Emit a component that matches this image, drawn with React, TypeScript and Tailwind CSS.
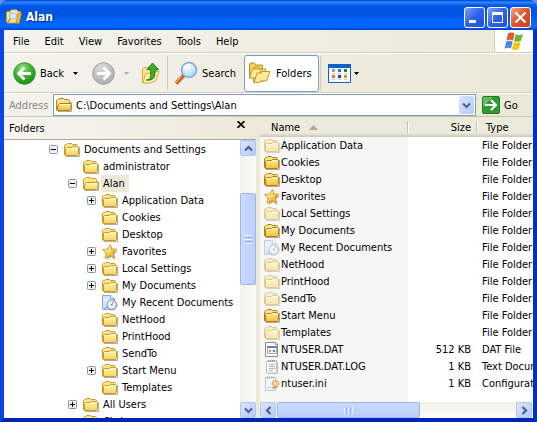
import React from 'react';

type IconName = 'folder' | 'open' | 'star' | 'recent' | 'dat' | 'log' | 'ini';

function FolderIcon({ open = false, deep = false }: { open?: boolean; deep?: boolean }) {
  const edge = deep ? '#b87c10' : '#cb9a24';
  const fill = deep ? 'url(#folder-deep)' : 'url(#folder-fill)';
  return (
    <svg width="16" height="16" viewBox="0 0 16 16" className="shrink-0" aria-hidden="true">
      <path d="M2 14.500h13.500V5" fill="none" stroke="#777" strokeOpacity=".6" />
      <path d="M.5 12.500V3.500l1-1h1l1-1h4l1 1h4l1 1V13.500h-12z" fill="#fbe58c" stroke={edge} />
      {open ? (
        <path d="M1 13.500 2.500 7.500l1-1h11.500V12l-1 1.500H1z" fill={fill} stroke={edge} />
      ) : (
        <path d="M1.500 13.500V6.500l1-1h5l1-1h5l1 1v7l-1 1z" fill={fill} stroke={edge} />
      )}
      <path d={open ? 'M4 7.500h10' : 'M3 6.500h5l1-1h4.500'} fill="none" stroke="#fffbd0" />
    </svg>
  );
}

function StarIcon() {
  return (
    <svg width="16" height="16" viewBox="0 0 16 16" className="shrink-0" aria-hidden="true">
      <path d="m9 2 1.700 4.500 5 .3-3.700 3.400 1.600 5.500-4.400-2.700-4.300 3 1-5.500z" fill="#777" fillOpacity=".6" />
      <path d="m8.500.5 1.200 4.500 5 0-3.700 3.500 1.500 5.500-4.700-2.500L3 14.500l1-5.300L.5 5.500l5-.3z" fill="url(#star-fill)" stroke="#c8921a" strokeWidth=".8" />
      <path d="M8 3v5L3 6.500" fill="none" stroke="#fff4a8" />
    </svg>
  );
}

function RecentIcon() {
  return (
    <svg width="16" height="16" viewBox="0 0 16 16" className="shrink-0" aria-hidden="true">
      <path d="M.5.5h8l4 3v11h-12z" fill="#d4e3fa" stroke="#8ca8d8" />
      <path d="M8.500.5v3h4" fill="#fff" stroke="#8ca8d8" />
      <path d="M2 3.500h4M2 5.500h3" stroke="#fff" />
      <circle cx="10" cy="10" r="5" fill="#b9cbe6" stroke="#8094b2" />
      <circle cx="9.500" cy="9.500" r="3.500" fill="#fff" stroke="#d5e0ee" />
      <path d="m9 10 2.500-3M9 10h2" stroke="#5478a8" />
      <path d="m5.500 12-3 1.500" stroke="#5b8adc" />
    </svg>
  );
}

function DatIcon() {
  return (
    <svg width="16" height="16" viewBox="0 0 16 16" className="shrink-0" aria-hidden="true">
      <path d="M1.500.5h10l2 2v12h-12z" fill="#fff" stroke="#8b8b86" />
      <path d="M11.500.5v2h2" fill="#ddd" stroke="#8b8b86" />
      <path d="M3.500 4.500h9v7h-9z" fill="#fff" stroke="#a5aac0" />
      <path d="M3 5h10" stroke="#7080a8" strokeWidth="2" />
      <path d="m4.500 9 1.500-1.500L7.500 9 6 10.500z" fill="#e8705c" />
      <path d="m8.500 9 1.500-1.500L11.500 9 10 10.500z" fill="#3f7ad8" />
    </svg>
  );
}

function LogIcon() {
  return (
    <svg width="16" height="16" viewBox="0 0 16 16" className="shrink-0" aria-hidden="true">
      <path d="M4 14.500h9.500V3" fill="none" stroke="#c4c4c4" />
      <path d="M2.500 2.500 12.500 1.500v11l-2 1.500h-8z" fill="#fff" stroke="#b9c0c4" />
      <path d="M4.500 1v2m2-2v2m2-2v2m2-2v2" stroke="#7f959d" />
      <path d="M5 5.500h6m-6 2h6m-6 2h6m-6 2h4" stroke="#aeb8bc" />
    </svg>
  );
}

function IniIcon() {
  return (
    <svg width="16" height="16" viewBox="0 0 16 16" className="shrink-0" aria-hidden="true">
      <path d="M1.500 1.500h10v13h-10z" fill="#f2f8ff" stroke="#b8c3cf" />
      <path d="M3.500.5v2m2-2v2m2-2v2m2-2v2" stroke="#9aacba" />
      <path d="M3.500 10.500h3v2h-3z" fill="#bcd8f5" />
      <circle cx="11.500" cy="7.500" r="3.500" fill="#ecc487" stroke="#d6ae70" strokeDasharray="2 1" />
      <circle cx="11" cy="7.500" r="1" fill="#fff4dd" />
      <path d="M8 11.500c2 1.500 3 0 5-1" fill="none" stroke="#c79a5d" strokeWidth="1.500" />
    </svg>
  );
}

function ItemIcon({ name, deep }: { name: IconName; deep?: boolean }) {
  if (name === 'star') return <StarIcon />;
  if (name === 'recent') return <RecentIcon />;
  if (name === 'dat') return <DatIcon />;
  if (name === 'log') return <LogIcon />;
  if (name === 'ini') return <IniIcon />;
  return <FolderIcon open={name === 'open'} deep={deep} />;
}

function Gradients() {
  return (
    <svg width="0" height="0" className="absolute" aria-hidden="true">
      <defs>
        <linearGradient id="folder-fill" x1="0" y1="0" x2="0" y2="1">
          <stop offset="0" stopColor="#fff6ae" />
          <stop offset="1" stopColor="#f7d262" />
        </linearGradient>
        <linearGradient id="folder-deep" x1="0" y1="0" x2="0" y2="1">
          <stop offset="0" stopColor="#fff096" />
          <stop offset="1" stopColor="#f4bd38" />
        </linearGradient>
        <linearGradient id="star-fill" x1="0" y1="0" x2="1" y2="1">
          <stop offset="0" stopColor="#fff08a" />
          <stop offset="1" stopColor="#f0a818" />
        </linearGradient>
        <radialGradient id="back-fill" cx=".4" cy=".25" r=".8">
          <stop offset="0" stopColor="#8fe07c" />
          <stop offset=".5" stopColor="#3cb22c" />
          <stop offset="1" stopColor="#178a12" />
        </radialGradient>
        <radialGradient id="forward-fill" cx=".4" cy=".25" r=".8">
          <stop offset="0" stopColor="#dcdcdc" />
          <stop offset="1" stopColor="#a9a9a9" />
        </radialGradient>
        <radialGradient id="lens-fill" cx=".4" cy=".3" r=".7">
          <stop offset="0" stopColor="#ffffff" />
          <stop offset="1" stopColor="#a2d8f8" />
        </radialGradient>
      </defs>
    </svg>
  );
}

const menus = ['File', 'Edit', 'View', 'Favorites', 'Tools', 'Help'];

interface TreeNode {
  label: string;
  level: 0 | 1 | 2;
  toggle?: 'plus' | 'minus';
  icon?: IconName;
  selected?: boolean;
}

const tree: TreeNode[] = [
  { label: 'Documents and Settings', level: 0, toggle: 'minus' },
  { label: 'administrator', level: 1 },
  { label: 'Alan', level: 1, toggle: 'minus', icon: 'open', selected: true },
  { label: 'Application Data', level: 2, toggle: 'plus' },
  { label: 'Cookies', level: 2 },
  { label: 'Desktop', level: 2 },
  { label: 'Favorites', level: 2, toggle: 'plus', icon: 'star' },
  { label: 'Local Settings', level: 2, toggle: 'plus' },
  { label: 'My Documents', level: 2, toggle: 'plus' },
  { label: 'My Recent Documents', level: 2, icon: 'recent' },
  { label: 'NetHood', level: 2 },
  { label: 'PrintHood', level: 2 },
  { label: 'SendTo', level: 2 },
  { label: 'Start Menu', level: 2, toggle: 'plus' },
  { label: 'Templates', level: 2 },
  { label: 'All Users', level: 1, toggle: 'plus' },
  { label: 'Chris', level: 1 },
];

const indents = ['pl-[45px]', 'pl-[64px]', 'pl-[83px]'];

interface FileEntry {
  name: string;
  size?: string;
  type: string;
  icon?: IconName;
  hidden?: boolean;
}

const files: FileEntry[] = [
  { name: 'Application Data', type: 'File Folder', hidden: true },
  { name: 'Cookies', type: 'File Folder' },
  { name: 'Desktop', type: 'File Folder' },
  { name: 'Favorites', type: 'File Folder', icon: 'star' },
  { name: 'Local Settings', type: 'File Folder', hidden: true },
  { name: 'My Documents', type: 'File Folder' },
  { name: 'My Recent Documents', type: 'File Folder', icon: 'recent', hidden: true },
  { name: 'NetHood', type: 'File Folder', hidden: true },
  { name: 'PrintHood', type: 'File Folder', hidden: true },
  { name: 'SendTo', type: 'File Folder', hidden: true },
  { name: 'Start Menu', type: 'File Folder' },
  { name: 'Templates', type: 'File Folder', hidden: true },
  { name: 'NTUSER.DAT', size: '512 KB', type: 'DAT File', icon: 'dat' },
  { name: 'NTUSER.DAT.LOG', size: '1 KB', type: 'Text Document', icon: 'log' },
  { name: 'ntuser.ini', size: '1 KB', type: 'Configuration Settings', icon: 'ini' },
];

function TitleBar() {
  const control = 'flex size-[21px] items-center justify-center rounded-[3px] border border-white';
  return (
    <header className="flex h-[30px] shrink-0 items-center gap-1 rounded-t-[7px] bg-[linear-gradient(to_bottom,#0a4fd8_0,#0a4fd8_1px,#3090ff_2px,#0f6ef5_4px,#0054e3_6px,#0055e6_16px,#0066ff_21px,#0066ff_27px,#003fd0_30px)] pt-1 pr-[6px] pl-[6px]">
      <svg width="16" height="16" viewBox="0 0 16 16" aria-hidden="true">
        <path d="M.5 12V3.500l1-1h2l1-1 3 1h7v2l-1.500 9.500H1.500z" fill="#fde78a" stroke="#d09a20" />
        <path d="M4 5l1.500-4H11l1 4z" fill="#fffbe4" stroke="#d9b65c" />
        <path d="m10 14 2.500-9.500h3L13 14z" fill="#f4bd44" stroke="#c88b14" />
        <circle cx="7" cy="7" r="3.500" fill="#d2efff" stroke="#8fbcdc" />
        <path d="m2 13 2.500-3.500" stroke="#e08a3a" strokeWidth="1.500" />
      </svg>
      <h1 className="flex-1 text-[12px] leading-4 font-bold text-white [text-shadow:1px_1px_1px_#002a8a]">Alan</h1>
      <div className="flex gap-0.5">
        <button aria-label="Minimize" className={`${control} bg-linear-to-br from-[#7f9ff5] via-[#2f5fe8] to-[#2253dd]`}>
          <svg width="19" height="19" viewBox="0 0 19 19"><path d="M4 12h7v3H4z" fill="#fff" /></svg>
        </button>
        <button aria-label="Maximize" className={`${control} bg-linear-to-br from-[#7f9ff5] via-[#2f5fe8] to-[#2253dd]`}>
          <svg width="19" height="19" viewBox="0 0 19 19"><path d="M4.500 4.500h10v10h-10z" fill="none" stroke="#fff" /><path d="M4 4h11v3H4z" fill="#fff" /></svg>
        </button>
        <button aria-label="Close" className={`${control} bg-linear-to-br from-[#f0a088] via-[#e0532c] to-[#cf3f17]`}>
          <svg width="19" height="19" viewBox="0 0 19 19"><path d="m4.500 4.500 10 10M14.500 4.500l-10 10" stroke="#fff" strokeWidth="2.200" /></svg>
        </button>
      </div>
    </header>
  );
}

function MenuBar() {
  return (
    <div className="flex h-[23px] shrink-0 border-b border-[#d3ceb8] bg-linear-to-r from-[#f4f3ee] to-[#ece9d8]">
      <nav className="flex flex-1 items-center gap-[15px] pl-[9px]">
        {menus.map((m) => (
          <button key={m}>{m}</button>
        ))}
      </nav>
      <div className="flex w-[39px] items-center justify-center border-l border-[#d3ceb8] bg-white">
        <svg width="20" height="19" viewBox="0 0 20 19" aria-label="Windows" role="img">
          <path d="M4 1.500c2-1.200 4-1.200 6.500 0L9 8.500C7 7.500 5 7.500 2.500 8.500z" fill="#e8562a" />
          <path d="M11.500 2.300c2.500 1.200 4.500 1 7.500-.5l-2 7c-2 1.200-4.500 1.500-7 .2z" fill="#6cb83c" />
          <path d="M2.200 9.800C4.500 8.500 6.500 8.500 8.700 9.600L7 16.500c-2-1-4-1-6.500.2z" fill="#4a86e0" />
          <path d="M9.700 10.200c2.500 1 4.500.8 7-.5l-2 7.300c-2.500 1.200-4.500 1.200-6.800 0z" fill="#f6c416" />
        </svg>
      </div>
    </div>
  );
}

function DownArrow({ muted = false }: { muted?: boolean }) {
  return (
    <svg width="5" height="3" viewBox="0 0 5 3" aria-hidden="true">
      <path d="M0 0h5L2.500 3z" fill={muted ? '#b5b2a3' : '#000'} />
    </svg>
  );
}

function Toolbar() {
  return (
    <div className="flex h-10 shrink-0 items-center border-t border-b border-t-white border-b-[#d3ceb8] bg-linear-to-r from-[#f3f2ed] to-[#ebe8d7] pl-[9px]">
      <button className="flex items-center gap-1">
        <svg width="23" height="23" viewBox="0 0 23 23" aria-hidden="true">
          <circle cx="11.500" cy="11.500" r="10.800" fill="url(#back-fill)" stroke="#3c9634" />
          <path d="M18 11.500H6M11.500 5.500l-6 6 6 6" fill="none" stroke="#fff" strokeWidth="2.800" />
        </svg>
        Back
      </button>
      <button aria-label="Back history" className="ml-[9px] py-2"><DownArrow /></button>
      <button aria-label="Forward" className="ml-[14px]">
        <svg width="23" height="23" viewBox="0 0 23 23" aria-hidden="true">
          <circle cx="11.500" cy="11.500" r="10.800" fill="url(#forward-fill)" stroke="#a2a2a2" />
          <path d="M5 11.500h12M11.500 5.500l6 6-6 6" fill="none" stroke="#fff" strokeWidth="2.800" />
        </svg>
      </button>
      <button aria-label="Forward history" className="ml-[9px] py-2"><DownArrow muted /></button>
      <button aria-label="Up" className="ml-3">
        <svg width="20" height="24" viewBox="0 0 20 24" aria-hidden="true">
          <path d="M1.500 21.500V8l1.500-1.500h4l1 1.500h8v4l-2 8-7 2z" fill="#fbe68e" stroke="#dcae42" />
          <path d="m2 22 2.500-9.500 6-.5 1-1.500h6.500l-3 9.500-6.500 2z" fill="#fff0ac" stroke="#dcae42" />
          <path d="M5.500 19c4.500 0 4.500-4 4-10.500H6L11.500 2l6 6.500h-3.500c.5 7-1 11.500-8.500 10.500z" fill="#3fae2c" stroke="#1d7f17" />
        </svg>
      </button>
      <div className="mx-[6px] h-[34px] w-px bg-[#d0ccb6]" />
      <button className="flex items-center gap-1">
        <svg width="24" height="24" viewBox="0 0 24 24" aria-hidden="true">
          <path d="m10 14-8 8.500" stroke="#c45a1c" strokeWidth="4" />
          <path d="m8 15-6.500 7" stroke="#f5a05c" strokeWidth="1.500" />
          <circle cx="15" cy="9" r="7.500" fill="url(#lens-fill)" stroke="#84a8d0" strokeWidth="1.500" />
          <path d="M10.500 8c.5-2.500 2-3.500 4-3.800" fill="none" stroke="#fff" strokeWidth="1.500" />
        </svg>
        Search
      </button>
      <button className="ml-2 flex h-[37px] items-center gap-[5px] rounded-[3px] border border-[#7f9fc4] bg-white pr-[6px] pl-1">
        <svg width="22" height="22" viewBox="0 0 22 22" aria-hidden="true">
          <path d="M.5 16V3l1-2h4l1 2h7v3l-2 9z" fill="#f5d164" stroke="#b98a20" />
          <path d="M4.500 20V7l1-2h4l1 2h6v4l-2 8z" fill="#fbe186" stroke="#c4932a" />
          <path d="m.5 16 3-9 9 0-3 9z" fill="#fdeca0" stroke="#c4932a" />
          <path d="m5 20.500 3-9.500h4l1-1.500h8L17.500 19l-6 0-1 1.500z" fill="#ffe994" stroke="#c4932a" />
        </svg>
        Folders
      </button>
      <div className="mr-[7px] ml-px h-[34px] w-px bg-[#d0ccb6]" />
      <button aria-label="Views" className="flex items-center gap-[3px]">
        <svg width="23" height="19" viewBox="0 0 23 19" aria-hidden="true">
          <path d="M.5.5h22v18H.5z" fill="#fff" stroke="#0f62ca" />
          <path d="M0 0h23v4H0z" fill="#0f62ca" />
          <path d="M4 5h3v3H4z" fill="#9a93bd" /><path d="M10 5h3v3h-3z" fill="#1c7bd2" /><path d="M16 5h3v3h-3z" fill="#1d8d1d" />
          <path d="M4 11h3v3H4z" fill="#e6704a" /><path d="M10 11h3v3h-3z" fill="#1448bb" /><path d="M16 11h3v3h-3z" fill="#c99c1d" />
          <path d="M4 9.500h3m3 0h3m3 0h3m-15 6h3m3 0h3m3 0h3" stroke="#c8ccd6" />
        </svg>
        <DownArrow />
      </button>
    </div>
  );
}

function Chevron({ d }: { d: string }) {
  return (
    <svg width="9" height="9" viewBox="0 0 9 9" aria-hidden="true">
      <path d={d} fill="none" stroke="#4d6185" strokeWidth="2.200" />
    </svg>
  );
}

function ScrollButton({ label, d }: { label: string; d: string }) {
  return (
    <button aria-label={label} className="flex size-4 shrink-0 items-center justify-center rounded-[2px] border border-[#b0c4f0] bg-linear-to-br from-[#dbe6ff] to-[#b4cafa]">
      <Chevron d={d} />
    </button>
  );
}

const UP = 'M1 6.500 4.500 3 8 6.500';
const DOWN = 'M1 2.500 4.500 6 8 2.500';
const LEFT = 'M6.500 1 3 4.500 6.500 8';
const RIGHT = 'M2.500 1 6 4.500 2.500 8';

function AddressBar() {
  return (
    <form className="flex h-[24px] shrink-0 items-center border-t border-b border-t-white border-b-[#c9c5b2] bg-linear-to-r from-[#f3f2ed] to-[#ebe8d7] pl-[5px]" onSubmit={(e) => e.preventDefault()}>
      <label htmlFor="address" className="w-[44px] text-[#8b8979]">Address</label>
      <div className="flex h-[22px] flex-1 items-center border border-[#7f9db9] bg-white pr-px pl-[2px]">
        <FolderIcon open deep />
        <input id="address" className="min-w-0 flex-1 pl-1 outline-none" defaultValue="C:\Documents and Settings\Alan" />
        <button type="button" aria-label="Address history" className="flex h-[18px] w-[15px] items-center justify-center rounded-[2px] bg-linear-to-br from-[#dbe6ff] to-[#b4cafa]">
          <Chevron d={DOWN} />
        </button>
      </div>
      <button type="submit" className="flex w-[57px] items-center gap-1 pl-[6px]">
        <svg width="18" height="18" viewBox="0 0 18 18" aria-hidden="true">
          <rect x=".5" y=".5" width="17" height="17" rx="1.500" fill="#2f9a30" stroke="#1f7a22" />
          <path d="M1 1h10L1 11z" fill="#8fd08a" fillOpacity=".6" />
          <path d="M3 9h10M9 4l5 5-5 5" fill="none" stroke="#fff" strokeWidth="2" />
        </svg>
        Go
      </button>
    </form>
  );
}

function FoldersPane() {
  return (
    <aside className="flex w-[252px] shrink-0 flex-col overflow-hidden">
      <div className="flex h-[23px] shrink-0 items-center justify-between border-b border-[#aca899] bg-linear-to-r from-[#f6f5f1] to-[#ece9d8] pr-[11px] pl-[5px]">
        <h2>Folders</h2>
        <button aria-label="Close folders" className="-mt-2">
          <svg width="8" height="7" viewBox="0 0 8 7"><path d="m.5 0 7 7m0-7-7 7" stroke="#000" strokeWidth="1.600" /></svg>
        </button>
      </div>
      <div className="flex min-h-0 flex-1 bg-white">
        <ul className="min-w-0 flex-1 overflow-hidden pt-px">
          {tree.map((n) => (
            <li key={n.label} className={`flex h-[17px] items-center ${indents[n.level]}`}>
              {n.toggle ? (
                <button aria-label={`${n.toggle === 'plus' ? 'Expand' : 'Collapse'} ${n.label}`} className="mr-[6px]">
                  <svg width="9" height="9" viewBox="0 0 9 9">
                    <rect x=".5" y=".5" width="8" height="8" rx="1" fill="#f1efe8" stroke="#7b98b5" />
                    <path d={n.toggle === 'plus' ? 'M2 4.500h5M4.500 2v5' : 'M2 4.500h5'} stroke="#000" />
                  </svg>
                </button>
              ) : (
                <span className="w-[15px]" />
              )}
              <ItemIcon name={n.icon ?? 'folder'} />
              <span className={`ml-[2px] h-[17px] px-[2px] whitespace-nowrap ${n.selected ? 'bg-[#ece9d8] pr-1' : ''}`}>{n.label}</span>
            </li>
          ))}
        </ul>
        <div className="flex w-4 shrink-0 flex-col bg-linear-to-r from-[#f1f0ea] to-[#fdfdfb]">
          <ScrollButton label="Scroll up" d={UP} />
          <div className="h-[37px]" />
          <div className="flex h-[92px] flex-col items-center justify-center gap-px rounded-[2px] border border-[#9db5e8] bg-linear-to-r from-[#cbdaff] to-[#bacdfb]">
            <i className="h-px w-[7px] bg-[#edf3ff]" />
            <i className="h-px w-[7px] bg-[#8cb0f8]" />
            <i className="h-px w-[7px] bg-[#edf3ff]" />
            <i className="h-px w-[7px] bg-[#8cb0f8]" />
            <i className="h-px w-[7px] bg-[#edf3ff]" />
          </div>
          <div className="flex-1" />
          <ScrollButton label="Scroll down" d={DOWN} />
        </div>
      </div>
    </aside>
  );
}

function FilesPane() {
  return (
    <main className="flex min-w-0 flex-1 flex-col overflow-hidden bg-white">
      <div className="min-h-0 flex-1 overflow-hidden">
        <table className="h-full w-full table-fixed border-collapse">
          <colgroup>
            <col className="w-[148px] bg-[#f7f7f7]" />
            <col className="w-[69px]" />
            <col />
          </colgroup>
          <thead>
            <tr className="h-5 bg-linear-to-b from-[#ebeadb] from-80% to-[#cbc7b8]">
              <th className="pl-[11px] text-left font-normal">
                <span className="flex h-3 items-center justify-between border-r border-[#c7c5b2]">
                  <span className="flex items-center gap-[9px]">
                    Name
                    <svg width="9" height="5" viewBox="0 0 9 5" aria-hidden="true"><path d="M4.500 0 9 5H0z" fill="#aca899" /></svg>
                  </span>
                </span>
              </th>
              <th className="text-right font-normal">
                <span className="flex h-3 items-center justify-end border-r border-l border-r-[#c7c5b2] border-l-white pr-[5px]">Size</span>
              </th>
              <th className="text-left font-normal">
                <span className="flex h-3 items-center border-l border-white pl-2">Type</span>
              </th>
            </tr>
          </thead>
          <tbody>
            {files.map((f) => (
              <tr key={f.name} className="h-[17px]">
                <td className="pl-1">
                  <span className="flex h-[17px] items-center gap-px whitespace-nowrap">
                    <span className={f.hidden ? 'opacity-50' : ''}>
                      <ItemIcon name={f.icon ?? 'folder'} deep={!f.hidden} />
                    </span>
                    {f.name}
                  </span>
                </td>
                <td className="pr-[6px] text-right">{f.size}</td>
                <td className="overflow-hidden pl-[5px] whitespace-nowrap">{f.type}</td>
              </tr>
            ))}
            <tr><td /><td /><td /></tr>
          </tbody>
        </table>
      </div>
      <div className="flex h-4 shrink-0 bg-linear-to-b from-[#f1f0ea] to-[#fdfdfb] pr-px">
        <ScrollButton label="Scroll left" d={LEFT} />
        <div className="ml-px flex w-[143px] items-center justify-center gap-px rounded-[2px] border border-[#9db5e8] bg-linear-to-b from-[#cbdaff] to-[#bacdfb]">
          <i className="h-[7px] w-px bg-[#edf3ff]" />
          <i className="h-[7px] w-px bg-[#8cb0f8]" />
          <i className="h-[7px] w-px bg-[#edf3ff]" />
          <i className="h-[7px] w-px bg-[#8cb0f8]" />
          <i className="h-[7px] w-px bg-[#edf3ff]" />
        </div>
        <div className="flex-1" />
        <ScrollButton label="Scroll right" d={RIGHT} />
      </div>
    </main>
  );
}

export default function App() {
  return (
    <div className="flex h-screen w-full flex-col overflow-hidden bg-[#6f8fe0] font-['DejaVu_Sans_Condensed','Noto_Sans',sans-serif] text-[11px] leading-[17px] text-black">
      <Gradients />
      <TitleBar />
      <div className="flex min-h-0 flex-1 flex-col border-4 border-t-0 border-r-[#0030c8] border-b-[#0024b4] border-l-[#0a46e4]">
        <MenuBar />
        <Toolbar />
        <AddressBar />
        <div className="flex min-h-0 flex-1 bg-[#ece9d8]">
          <FoldersPane />
          <div className="w-1 shrink-0" />
          <FilesPane />
        </div>
      </div>
    </div>
  );
}
